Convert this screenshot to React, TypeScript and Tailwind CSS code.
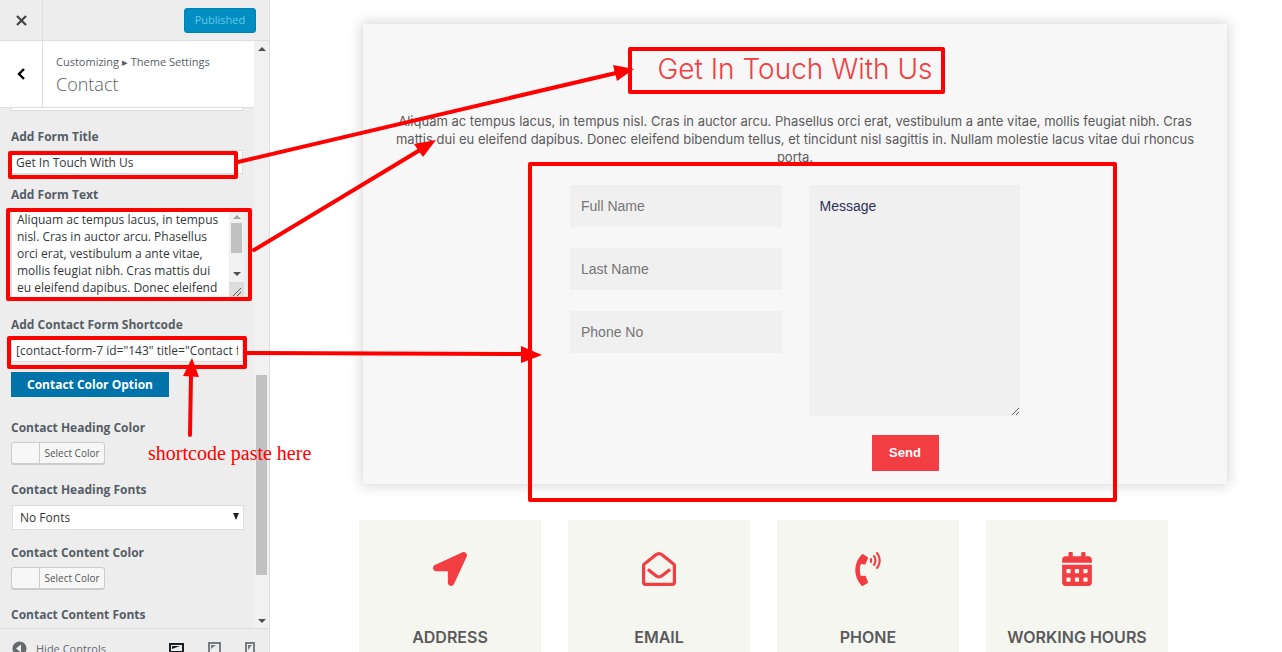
import type { ReactNode } from "react";
import { FaCalendarAlt, FaLocationArrow, FaPhoneVolume, FaRegEnvelopeOpen } from "react-icons/fa";

const formText =
  "Aliquam ac tempus lacus, in tempus nisl. Cras in auctor arcu. Phasellus orci erat, vestibulum a ante vitae, mollis feugiat nibh. Cras mattis dui eu eleifend dapibus. Donec eleifend bibendum tellus, et tincidunt nisl sagittis in. Nullam molestie lacus vitae dui rhoncus porta.";

const infoCards = [
  { title: "ADDRESS", icon: <FaLocationArrow /> },
  { title: "EMAIL", icon: <FaRegEnvelopeOpen /> },
  { title: "PHONE", icon: <FaPhoneVolume /> },
  { title: "WORKING HOURS", icon: <FaCalendarAlt /> },
];

function Label({ htmlFor, children }: { htmlFor: string; children: ReactNode }) {
  return (
    <label htmlFor={htmlFor} className="block h-6 text-[12px] leading-6 font-bold text-[#555d66]">
      {children}
    </label>
  );
}

function ColorPicker({ id }: { id: string }) {
  return (
    <button
      id={id}
      className="flex h-[22px] w-[94px] rounded-[3px] border border-[#ccc] bg-[#f7f7f7] text-[10px] leading-5 text-[#555] shadow-[0_1px_0_#ccc]"
    >
      <span className="h-full w-7 border-r border-[#ccc]" />
      <span className="flex-1 text-center">Select Color</span>
    </button>
  );
}

function Triangle({ up = false, color = "#505050" }: { up?: boolean; color?: string }) {
  return (
    <svg width="8" height="4" viewBox="0 0 8 4" fill={color}>
      <path d={up ? "M0 4 4 0l4 4z" : "M0 0h8L4 4z"} />
    </svg>
  );
}

function Sidebar() {
  return (
    <aside className="flex h-full w-[270px] shrink-0 flex-col border-r border-[#ddd] bg-[#ededed] font-['Open_Sans','Noto_Sans',sans-serif]">

      {/* TOP BAR */}

      <div className="flex h-[41px] shrink-0 items-center border-b border-[#ddd]">
        <button aria-label="Close" className="flex h-full w-[43px] items-center justify-center border-r border-[#ddd]">
          <svg width="11" height="11" viewBox="0 0 11 11" stroke="#444" strokeWidth="2.2">
            <path d="M1 1l9 9M10 1l-9 9" />
          </svg>
        </button>
        <button className="mr-[13px] ml-auto h-[25px] w-[72px] rounded-[3px] border border-[#0081b3] bg-[#008ec2] text-[11px] text-[#66c6e4]">
          Published
        </button>
      </div>

      <div className="flex min-h-0 flex-1">
        <div className="min-w-0 flex-1 overflow-hidden">

          {/* SECTION TITLE */}

          <div className="flex h-[67px] border-b border-[#ddd] bg-white">
            <button aria-label="Back" className="flex w-[43px] items-center justify-center border-r border-[#ddd]">
              <svg width="8" height="12" viewBox="0 0 8 12" fill="none" stroke="#000" strokeWidth="2.4">
                <path d="M7 1L2 6l5 5" />
              </svg>
            </button>
            <div className="pt-3 pl-[13px] text-[#555d66]">
              <p className="text-[11px] leading-[18px]">Customizing ▸ Theme Settings</p>
              <h3 className="text-[18px] leading-[26px] font-light">Contact</h3>
            </div>
          </div>

          {/* CONTROLS */}

          <div className="pl-[11px]">
            <div className="h-[3px] w-[232px] border border-t-0 border-[#ddd] bg-white" />

            <div className="pt-[14px]">
              <Label htmlFor="form-title">Add Form Title</Label>
              <input
                id="form-title"
                defaultValue="Get In Touch With Us"
                className="mt-px block h-6 w-[232px] border border-[#ddd] bg-white px-1 text-[12px] text-[#32373c]"
              />
            </div>

            <div className="pt-[9px]">
              <Label htmlFor="form-text">Add Form Text</Label>
              <div className="mt-px flex h-[91px] w-[233px] border border-r-0 border-[#ddd] bg-white">
                <textarea
                  id="form-text"
                  defaultValue={formText}
                  className="block h-full min-w-0 flex-1 resize-none overflow-hidden pt-0.5 pr-1 pl-[5px] text-[12px] leading-[17px] text-[#32373c]"
                />
                <div className="flex w-[15px] flex-col items-center bg-[#f1f1f1] pt-0.5">
                  <div className="flex h-3 items-center">
                    <Triangle up color="#a3a3a3" />
                  </div>
                  <div className="h-[30px] w-[11px] bg-[#c1c1c1]" />
                  <div className="mt-auto flex h-4 items-center">
                    <Triangle />
                  </div>
                  <div className="flex h-4 w-full items-end justify-center bg-[#dcdcdc] pb-0.5">
                    <svg width="8" height="8" viewBox="0 0 8 8" stroke="#555">
                      <path d="M0 8l8-8M4 8l4-4" />
                    </svg>
                  </div>
                </div>
              </div>
            </div>

            <div className="pt-[14px]">
              <Label htmlFor="shortcode">Add Contact Form Shortcode</Label>
              <input
                id="shortcode"
                defaultValue={'[contact-form-7 id="143" title="Contact form 1"]'}
                className="mt-px block h-6 w-[232px] border border-[#ddd] bg-white px-1 text-[12px] text-[#32373c]"
              />
            </div>

            <button className="mt-[10px] block h-[25px] w-[158px] bg-[#0073aa] text-[12px] font-bold text-white">
              Contact Color Option
            </button>

            <div className="pt-[19px]">
              <Label htmlFor="heading-color">Contact Heading Color</Label>
              <div className="pt-0.5">
                <ColorPicker id="heading-color" />
              </div>
            </div>

            <div className="pt-[14px]">
              <Label htmlFor="heading-fonts">Contact Heading Fonts</Label>
              <div className="relative mt-[3px] ml-px w-[232px]">
                <select
                  id="heading-fonts"
                  className="block h-[25px] w-full appearance-none border border-[#ddd] bg-white px-[7px] text-[12px] text-[#32373c]"
                >
                  <option>No Fonts</option>
                </select>
                <svg className="pointer-events-none absolute top-2 right-[5px]" width="6" height="7" viewBox="0 0 6 7" fill="#222">
                  <path d="M0 0h6L3 7z" />
                </svg>
              </div>
            </div>

            <div className="pt-[11px]">
              <Label htmlFor="content-color">Contact Content Color</Label>
              <div className="pt-0.5">
                <ColorPicker id="content-color" />
              </div>
            </div>

            <p className="pt-[14px] text-[12px] leading-6 font-bold text-[#555d66]">Contact Content Fonts</p>
          </div>
        </div>

        {/* SCROLLBAR */}

        <div className="flex w-[15px] flex-col items-center justify-between bg-[#f1f1f1] pt-1.5 pb-[5px]">
          <Triangle up />
          <div className="mt-auto mb-[44px] h-[200px] w-[11px] bg-[#c1c1c1]" />
          <Triangle />
        </div>
      </div>

      {/* FOOTER */}

      <div className="flex h-6 shrink-0 items-start border-t border-[#ddd] pt-3 pl-3">
        <button className="flex items-start gap-[9px] text-[11px] leading-4 text-[#656a6f]">
          <svg width="15" height="15" viewBox="0 0 15 15">
            <circle cx="7.5" cy="7.5" r="7" fill="#656a6f" />
            <path d="M4 7.5l5-4v8z" fill="#ededed" />
          </svg>
          Hide Controls
        </button>
        <div className="mr-[14px] ml-auto flex gap-6">
          <button aria-label="Desktop">
            <svg width="15" height="14" viewBox="0 0 15 14" fill="none" stroke="#191e23" strokeWidth="2">
              <path d="M1 2h13v8H1z" />
              <path d="M3 4h8L3 7z" fill="#191e23" stroke="none" />
            </svg>
          </button>
          <button aria-label="Tablet">
            <svg width="13" height="16" viewBox="0 0 13 16" fill="none" stroke="#777c82" strokeWidth="2">
              <path d="M1 2h11v13H1z" />
              <path d="M3 4h5L3 8z" fill="#777c82" stroke="none" />
            </svg>
          </button>
          <button aria-label="Mobile">
            <svg width="10" height="16" viewBox="0 0 10 16" fill="none" stroke="#777c82" strokeWidth="2">
              <path d="M1 2h8v13H1z" />
              <path d="M3 4h4L3 9z" fill="#777c82" stroke="none" />
            </svg>
          </button>
        </div>
      </div>

    </aside>
  );
}

function Preview() {
  const field = "block h-[42px] w-full bg-[#f0f0f0] px-[11px] text-[14px] placeholder:text-[#757575]";

  return (
    <main className="min-w-0 flex-1 pt-6">

      {/* CONTACT FORM */}

      <section className="mr-[55px] ml-[93px] bg-[#f7f7f7] px-5 pt-6 pb-[13px] shadow-[0_0_12px_2px_#d9d9d9]">
        <h2 className="text-center text-[28px] leading-[42px] font-light text-[#f23e42]">Get In Touch With Us</h2>
        <p className="mt-[22px] text-center text-[13px] leading-[18px] text-[#5a5a5a]">{formText}</p>

        <form className="mt-[19px] ml-[187px] grid w-[450px] grid-cols-2 gap-[27px] font-['Liberation_Sans',sans-serif]">
          <div className="space-y-[21px]">
            <input aria-label="Full Name" placeholder="Full Name" className={field} />
            <input aria-label="Last Name" placeholder="Last Name" className={field} />
            <input aria-label="Phone No" placeholder="Phone No" className={field} />
          </div>
          <div>
            <textarea
              aria-label="Message"
              defaultValue="Message"
              className="block h-[231px] w-full resize bg-[#f0f0f0] px-[11px] py-3 text-[14px] leading-[18px] text-[#2c3058]"
            />
            <button
              type="button"
              className="mt-[19px] ml-[63px] block h-9 w-[67px] bg-[#f23e42] text-[13px] font-bold text-white"
            >
              Send
            </button>
          </div>
        </form>
      </section>

      {/* INFO CARDS */}

      <section className="mt-9 mr-[114px] ml-[89px] grid grid-cols-4 gap-[27px]">
        {infoCards.map((card) => (
          <div key={card.title} className="flex h-[180px] flex-col items-center bg-[#f5f6f0] pt-8">
            <div className="text-[34px] text-[#f23e42]">{card.icon}</div>
            <h3 className="mt-[39px] text-[16px] leading-6 font-semibold whitespace-nowrap text-[#5a5a5a]">
              {card.title}
            </h3>
          </div>
        ))}
      </section>

    </main>
  );
}

// red boxes and arrows that link the settings to the preview
function Annotations() {
  return (
    <div className="pointer-events-none absolute inset-0">
      <svg className="h-full w-full" fill="none" stroke="#f00" strokeWidth="4" strokeLinejoin="round" strokeLinecap="round">
        <rect x="10" y="153" width="226" height="24" />
        <rect x="8" y="210" width="242" height="89" />
        <rect x="9" y="338" width="236" height="29" />
        <rect x="630" y="49" width="313" height="43" />
        <rect x="530" y="164" width="585" height="336" />
        <path d="M238 162L616 73M254 250L420 150M246 353L523 354M190 435L191 375" />
        <g fill="#f00" stroke="none">
          <path d="M613 65L634 69L617 81z" />
          <path d="M414 144L436 140L423 157z" />
          <path d="M521 346L542 355L521 363z" />
          <path d="M183 376L192 358L199 377z" />
        </g>
      </svg>
      <span className="absolute top-[441px] left-[148px] font-['Liberation_Serif',serif] text-[20px] leading-6 text-[#f00]">
        shortcode paste here
      </span>
    </div>
  );
}

export default function App() {
  return (
    <div className="relative flex h-screen overflow-hidden bg-white font-['Inter',sans-serif]">
      <Sidebar />
      <Preview />
      <Annotations />
    </div>
  );
}
